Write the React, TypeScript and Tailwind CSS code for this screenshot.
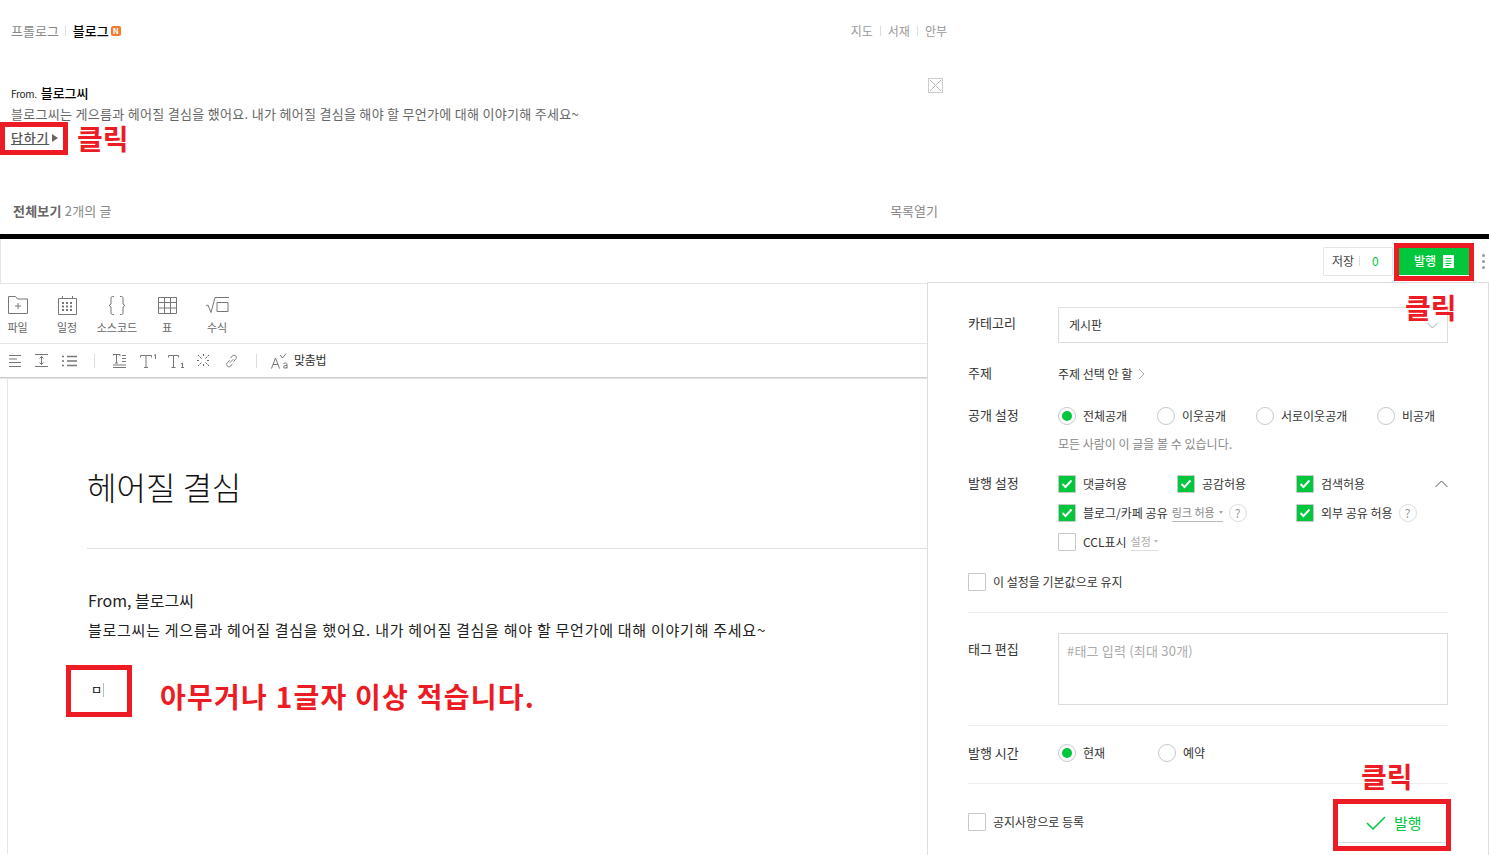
import {ReactNode} from "react";

const font = "font-['Noto_Sans_CJK_KR','Noto_Sans',sans-serif]";

function Radio({checked, label, className}: {checked?: boolean; label: string; className?: string}) {
    return (
        <div className={`flex items-center ${className ?? ""}`}>
            <span className="flex h-[18px] w-[18px] shrink-0 items-center justify-center rounded-full border border-[#c8c8c8]">
                {checked && <span className="h-[10px] w-[10px] rounded-full bg-[#00c73c]" />}
            </span>
            <span className="ml-[7px] text-[12px] text-[#333]">{label}</span>
        </div>
    );
}

function Check({checked}: {checked?: boolean}) {
    return checked ? (
        <span className="flex h-[18px] w-[18px] shrink-0 items-center justify-center rounded-[1px] border border-[#c8c8c8] bg-[#00c73c]">
            <svg width="12" height="10" viewBox="0 0 12 10" fill="none" stroke="#fff" strokeWidth="2">
                <path d="M1.5 5l3 3 6-6.5" />
            </svg>
        </span>
    ) : (
        <span className="h-[18px] w-[18px] shrink-0 rounded-[1px] border border-[#c8c8c8] bg-white" />
    );
}

function CheckRow({checked, label, className, children}: {checked?: boolean; label: string; className?: string; children?: ReactNode}) {
    return (
        <div className={`flex h-[18px] items-center ${className ?? ""}`}>
            <Check checked={checked} />
            <span className="ml-[7px] whitespace-nowrap text-[12px] text-[#333]">{label}</span>
            {children}
        </div>
    );
}

function Help() {
    return (
        <span className="ml-[6px] flex h-[18px] w-[18px] items-center justify-center rounded-full border border-[#ddd] text-[12px] text-[#999]">?</span>
    );
}

function ToolItem({label, width, children}: {label: string; width: string; children: ReactNode}) {
    return (
        <div className={`flex flex-col items-center ${width}`}>
            <div className="flex h-[24px] items-center">{children}</div>
            <span className="mt-[2px] whitespace-nowrap text-[11px] text-[#666]">{label}</span>
        </div>
    );
}

function Annotation({children, className}: {children: ReactNode; className: string}) {
    return <div className={`absolute whitespace-nowrap text-[28px] font-bold leading-[30px] text-[#ed1c24] ${className}`}>{children}</div>;
}

const icon = {fill: "none", stroke: "#777", strokeWidth: 1};

export default function App() {
    return (
        <div className={`relative h-[855px] w-[1489px] overflow-hidden bg-white ${font}`}>
            {/* blog page on top */}
            <div className="flex h-[234px] w-[948px] flex-col pl-[11px]">
                <div className="mt-[22px] flex h-[18px] items-center justify-between pr-px">
                    <div className="flex items-center text-[13px]">
                        <span className="text-[#888]">프롤로그</span>
                        <span className="ml-[6px] mr-[7px] h-[10px] w-px bg-[#ddd]" />
                        <span className="font-medium text-black">블로그</span>
                        <span className="ml-[2px] flex h-[10px] w-[10px] items-center justify-center rounded-[2px] bg-[#f47c2c] text-[8px] font-bold leading-none text-white">N</span>
                    </div>
                    <div className="flex items-center text-[12px] text-[#999]">
                        <span>지도</span>
                        <span className="mx-[7px] h-[10px] w-px bg-[#ddd]" />
                        <span>서재</span>
                        <span className="mx-[7px] h-[10px] w-px bg-[#ddd]" />
                        <span>안부</span>
                    </div>
                </div>
                <div className="relative mt-[44px] flex h-[18px] items-center">
                    <span className="text-[10px] tracking-[-0.3px] text-[#222]">From.</span>
                    <span className="ml-[4px] text-[13px] font-medium text-black">블로그씨</span>
                </div>
                <div className="mt-[3px] h-[18px] text-[13px] leading-[18px] tracking-[0.3px] text-[#666]">
                    블로그씨는 게으름과 헤어질 결심을 했어요. 내가 헤어질 결심을 해야 할 무언가에 대해 이야기해 주세요~
                </div>
                <div className="mt-[6px] flex h-[18px] items-center text-[13px] font-medium tracking-[0.8px] text-[#555]">
                    <span className="underline">답하기</span>
                    <span className="ml-[3px] h-0 w-0 border-y-[4px] border-l-[6px] border-y-transparent border-l-[#666]" />
                </div>
                <div className="mt-[54px] flex h-[20px] items-center justify-between pl-[2px] pr-[10px] text-[13px] text-[#888]">
                    <span className="tracking-[0.2px]">
                        <span className="font-bold text-[#666]">전체보기</span> 2개의 글
                    </span>
                    <span>목록열기</span>
                </div>
            </div>
            <div className="h-[5px] bg-black" />

            {/* editor header */}
            <div className="flex h-[45px] items-center justify-end border-b border-l border-[#e5e5e5] pr-[20px]">
                <div className="flex h-[29px] w-[70px] items-center rounded-[1px] border border-[#e5e5e5] pl-[8px] text-[12px] text-[#444]">
                    저장
                    <span className="ml-[5px] h-[10px] w-px bg-[#ddd]" />
                    <span className="ml-[12px] text-[#00c73c]">0</span>
                </div>
                <div className="ml-[6px] flex h-[28px] w-[70px] items-center justify-center gap-[7px] bg-[#00c73c] text-[12px] font-medium text-white">
                    발행
                    <svg width="11" height="13" viewBox="0 0 11 13">
                        <path fill="#fff" d="M0 0h11v13H0z" />
                        <path stroke="#00c73c" d="M2.500 3.500h6M2.500 6h6M2.500 8.500h6M2.500 10.500h4" />
                    </svg>
                </div>
                <div className="-mr-[16px] ml-[13px] flex flex-col gap-[3px]">
                    <span className="h-[3px] w-[3px] rounded-full bg-[#999]" />
                    <span className="h-[3px] w-[3px] rounded-full bg-[#999]" />
                    <span className="h-[3px] w-[3px] rounded-full bg-[#999]" />
                </div>
            </div>

            {/* toolbar */}
            <div className="flex h-[60px] items-start border-b border-[#e5e5e5] pt-[9px]">
                <ToolItem label="파일" width="w-[35px]">
                    <svg width="20" height="18" viewBox="0 0 20 18" {...icon}>
                        <path d="M.5 17.500V.5h7l2 2.500h10v14.500zM10 7v6M7 10h6" />
                    </svg>
                </ToolItem>
                <ToolItem label="일정" width="w-[50px] ml-[7px]">
                    <svg width="19" height="19" viewBox="0 0 19 19" {...icon}>
                        <path d="M.5 2.500h18v16H.5zM4.500 0v2.500M14.500 0v2.500" />
                        <path strokeDasharray="2 2" strokeWidth="2" d="M4 7h12M4 10.500h12M4 14h12" />
                    </svg>
                </ToolItem>
                <ToolItem label="소스코드" width="w-[50px]">
                    <svg width="18" height="19" viewBox="0 0 18 19" {...icon}>
                        <path d="M6 .5H4.500C3.500.5 3 1 3 2v6L1 9.500 3 11v6c0 1 .5 1.500 1.500 1.500H6M12 .5h1.500c1 0 1.500.5 1.500 1.500v6l2 1.500L15 11v6c0 1-.5 1.500-1.500 1.500H12" />
                    </svg>
                </ToolItem>
                <ToolItem label="표" width="w-[50px]">
                    <svg width="19" height="17" viewBox="0 0 19 17" {...icon}>
                        <path d="M.5.5h18v16H.5zM.5 5.500h18M.5 11h18M6.500.5v16M12.500.5v16" />
                    </svg>
                </ToolItem>
                <ToolItem label="수식" width="w-[50px]">
                    <svg width="23" height="16" viewBox="0 0 23 16" {...icon}>
                        <path d="M0 9l2-1 3 7.500L9 .5h14M11 5.500h11v9H11z" />
                    </svg>
                </ToolItem>
            </div>
            <div className="flex h-[34px] items-center border-b border-[#ccc] pl-[9px] shadow-[0_1px_1px_rgba(0,0,0,0.1)]">
                <svg width="12" height="12" viewBox="0 0 12 12" {...icon}><path d="M0 .5h12M0 4h8M0 7.500h12M0 11.500h12" /></svg>
                <svg className="ml-[14px]" width="13" height="13" viewBox="0 0 13 13" {...icon}><path d="M0 .5h13M0 12.500h13M6.500 2.500v8M4.500 4.500l2-2 2 2M4.500 8.500l2 2 2-2" /></svg>
                <svg className="ml-[14px]" width="15" height="12" viewBox="0 0 15 12" {...icon}><path d="M5 1.500h10M5 6h10M5 10.500h10M0 1.500h2M0 6h2M0 10.500h2" strokeWidth="1.500" /></svg>
                <span className="ml-[17px] h-[14px] w-px bg-[#ddd]" />
                <svg className="ml-[18px]" width="13" height="14" viewBox="0 0 13 14" {...icon}><path d="M0 2V.5h7V2M3.500 .5V9M2 9h3M9 1.500h4M9 4.500h4M9 7.500h4M0 11h13M0 13.500h13" /></svg>
                <svg className="ml-[14px]" width="17" height="14" viewBox="0 0 17 14" {...icon}><path d="M.5 3.500V1.500h11v2M6 1.500v12M4 13.500h4M14 1.500l1.500-1V5" /></svg>
                <svg className="ml-[11px]" width="16" height="14" viewBox="0 0 16 14" {...icon}><path d="M.5 3.500V1.500h10v2M5.500 1.500v12M3.500 13.500h4M13 10l1.500-1v4.500M13 13.500h3" /></svg>
                <svg className="ml-[13px]" width="13" height="13" viewBox="0 0 13 13" fill="none" stroke="#666"><path d="M1 1l3.500 3.500M12 1L8.500 4.500M1 12l3.500-3.500M12 12L8.500 8.500M6.500 0v3M6.500 10v3M0 6.500h3M10 6.500h3" strokeDasharray="2 1" /></svg>
                <svg className="ml-[15px]" width="13" height="14" viewBox="0 0 14 14" {...icon}><path d="M6 4l2-2.500c1-1 2.500-1 3.500 0s1 2.500 0 3.500L9 8M8 10l-2 2.500c-1 1-2.500 1-3.500 0s-1-2.500 0-3.500L5 6M5 9l4-4" /></svg>
                <span className="ml-[18px] h-[14px] w-px bg-[#ddd]" />
                <svg className="ml-[14px]" width="17" height="16" viewBox="0 0 17 16" {...icon}><path d="M.5 15.500L4.500 5l4 10.500M2 11.500h5M9 2l2.500 3L15 .5M16 15.500v-4c0-1-.5-1.500-1.500-1.500s-2 .5-2 1M16 12.500c-1 0-3.500 0-3.500 1.500s2.500 1.500 3.500 0" /></svg>
                <span className="-mt-[1px] ml-[6px] text-[12px] tracking-[-0.3px] text-[#333]">맞춤법</span>
            </div>

            {/* post body */}
            <div className="ml-[7px] h-[476px] border-l border-[#e5e5e5] pl-[79px]">
                <div className="mr-[562px] h-[171px] border-b border-[#ddd] pt-[84px] text-[32px] font-light leading-[48px] text-[#111]">헤어질 결심</div>
                <div className="mt-[39px] pl-px text-[16px] leading-[24px] text-[#222]">From, 블로그씨</div>
                <div className="mt-[6px] pl-px text-[15px] leading-[24px] tracking-[0.74px] text-[#222]">
                    블로그씨는 게으름과 헤어질 결심을 했어요. 내가 헤어질 결심을 해야 할 무언가에 대해 이야기해 주세요~
                </div>
                <div className="mt-[36px] flex h-[24px] items-center pl-[4px]">
                    <span className="text-[12px] text-black">ㅁ</span>
                    <span className="ml-[1px] h-[14px] w-px bg-[#bbb]" />
                </div>
            </div>

            {/* publish panel */}
            <div className="absolute left-[927px] top-[282px] h-[574px] w-[562px] border border-[#ddd] bg-white px-[40px] text-[12px] text-[#333]">
                <div className="mt-[24px] flex">
                    <span className="w-[90px] pt-[6px] text-[13px]">카테고리</span>
                    <div className="flex h-[36px] flex-1 items-center justify-between border border-[#ddd] pl-[10px] pr-[9px] text-[#333]">
                        게시판
                        <svg width="11" height="7" viewBox="0 0 11 7" fill="none" stroke="#aaa"><path d="M.5 1l5 5 5-5" /></svg>
                    </div>
                </div>
                <div className="mt-[22px] flex h-[18px] items-center">
                    <span className="-mt-[2px] w-[90px] text-[13px]">주제</span>
                    <span>주제 선택 안 할</span>
                    <svg className="ml-[6px]" width="7" height="12" viewBox="0 0 7 12" fill="none" stroke="#aaa"><path d="M1 1l5 5-5 5" /></svg>
                </div>
                <div className="mt-[24px] flex h-[18px] items-center">
                    <span className="-mt-[2px] w-[90px] text-[13px]">공개 설정</span>
                    <Radio checked label="전체공개" className="w-[99px]" />
                    <Radio label="이웃공개" className="w-[99px]" />
                    <Radio label="서로이웃공개" className="w-[121px]" />
                    <Radio label="비공개" />
                </div>
                <div className="ml-[90px] mt-[10px] h-[18px] leading-[18px] text-[#888]">모든 사람이 이 글을 볼 수 있습니다.</div>
                <div className="relative mt-[22px] flex">
                    <span className="-mt-[2px] w-[90px] text-[13px]">발행 설정</span>
                    <div className="flex flex-col gap-[11px]">
                        <div className="flex">
                            <CheckRow checked label="댓글허용" className="w-[119px]" />
                            <CheckRow checked label="공감허용" className="w-[119px]" />
                            <CheckRow checked label="검색허용" />
                        </div>
                        <div className="flex">
                            <CheckRow checked label="블로그/카페 공유" className="w-[238px]">
                                <span className="ml-[4px] flex items-center border-b border-[#bbb] text-[11px] text-[#888]">
                                    링크 허용
                                    <span className="ml-[4px] h-0 w-0 border-x-[2px] border-t-[3px] border-x-transparent border-t-[#aaa]" />
                                </span>
                                <Help />
                            </CheckRow>
                            <CheckRow checked label="외부 공유 허용"><Help /></CheckRow>
                        </div>
                        <CheckRow label="CCL표시">
                            <span className="ml-[4px] flex items-center border-b border-[#ddd] text-[11px] text-[#aaa]">
                                설정
                                <span className="ml-[3px] h-0 w-0 border-x-[2px] border-t-[3px] border-x-transparent border-t-[#bbb]" />
                            </span>
                        </CheckRow>
                    </div>
                    <svg className="absolute right-0 top-[5px]" width="13" height="8" viewBox="0 0 13 8" fill="none" stroke="#555"><path d="M.5 7l6-6 6 6" /></svg>
                </div>
                <CheckRow label="이 설정을 기본값으로 유지" className="mt-[22px]" />
                <div className="mt-[21px] h-px bg-[#eee]" />
                <div className="mt-[20px] flex">
                    <span className="w-[90px] pt-[6px] text-[13px]">태그 편집</span>
                    <div className="h-[72px] flex-1 border border-[#ddd] px-[8px] py-[7px] text-[13px] tracking-[0.2px] text-[#aaa]">#태그 입력 (최대 30개)</div>
                </div>
                <div className="mt-[20px] h-px bg-[#eee]" />
                <div className="mt-[18px] flex h-[18px] items-center">
                    <span className="-mt-[1px] w-[90px] text-[13px]">발행 시간</span>
                    <Radio checked label="현재" className="w-[100px]" />
                    <Radio label="예약" />
                </div>
                <div className="mt-[21px] h-px bg-[#eee]" />
                <div className="mt-[19px] flex h-[40px] items-center justify-between">
                    <CheckRow label="공지사항으로 등록" className="-mt-[2px]" />
                    <div className="mr-[2px] flex h-[40px] w-[108px] items-center gap-[8px] border-y border-[#ddd] pl-[28px] text-[15px] text-[#00c73c]">
                        <svg width="20" height="14" viewBox="0 0 20 14" fill="none" stroke="#00c73c" strokeWidth="1.500"><path d="M1 7l6 6L19 1" /></svg>
                        발행
                    </div>
                </div>
            </div>

            {/* red guide boxes */}
            <div className="absolute left-0 top-[122px] h-[33px] w-[68px] border-[5px] border-[#ed1c24]" />
            <div className="absolute left-[1394px] top-[243px] h-[38px] w-[80px] border-[5px] border-[#ed1c24]" />
            <div className="absolute left-[66px] top-[665px] h-[52px] w-[66px] border-[5px] border-[#ed1c24]" />
            <div className="absolute left-[1333px] top-[799px] h-[52px] w-[118px] border-[5px] border-[#ed1c24]" />
            <Annotation className="left-[77px] top-[123px]">클릭</Annotation>
            <Annotation className="left-[1405px] top-[292px]">클릭</Annotation>
            <Annotation className="left-[1361px] top-[761px]">클릭</Annotation>
            <Annotation className="left-[160px] top-[681px] tracking-[1.25px]">아무거나 1글자 이상 적습니다.</Annotation>

            <div className="absolute left-[928px] top-[78px] flex h-[15px] w-[15px] items-center justify-center border border-[#ccc]">
                <svg width="11" height="11" viewBox="0 0 11 11" stroke="#bbb"><path d="M0 0l11 11M11 0L0 11" /></svg>
            </div>
        </div>
    );
}
